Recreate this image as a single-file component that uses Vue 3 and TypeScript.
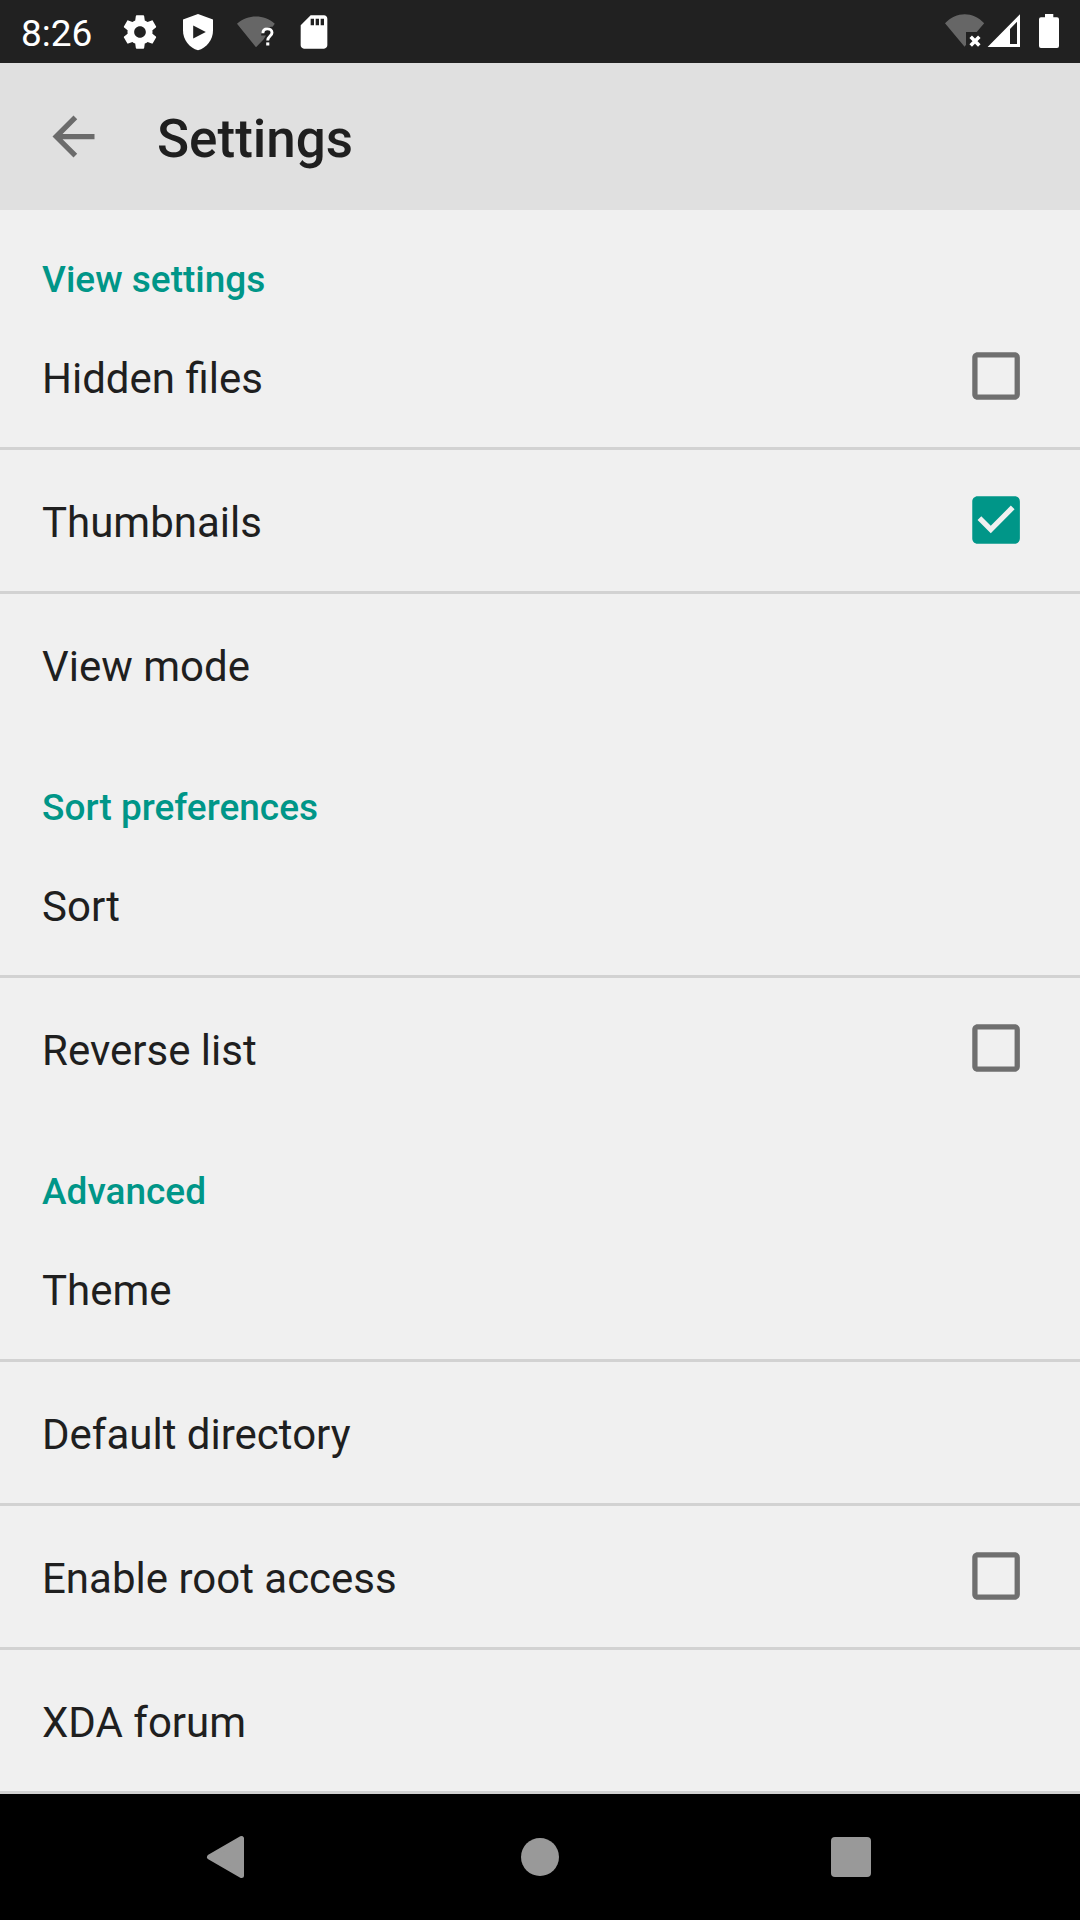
<script setup lang="ts">
interface Item {
  label: string
  checked?: boolean
}
interface Section {
  title: string
  items: Item[]
}

const sections: Section[] = [
  {
    title: 'View settings',
    items: [
      { label: 'Hidden files', checked: false },
      { label: 'Thumbnails', checked: true },
      { label: 'View mode' },
    ],
  },
  {
    title: 'Sort preferences',
    items: [{ label: 'Sort' }, { label: 'Reverse list', checked: false }],
  },
  {
    title: 'Advanced',
    items: [
      { label: 'Theme' },
      { label: 'Default directory' },
      { label: 'Enable root access', checked: false },
      { label: 'XDA forum' },
    ],
  },
]
</script>

<template>
  <div class="screen">
    <header class="status">
      <span class="clock">8:26</span>
      <div class="notifications">
        <svg width="40" height="40" viewBox="0 0 24 24" fill="#fff">
          <path d="M19.43 12.98c.04-.32.07-.64.07-.98s-.03-.66-.07-.98l2.11-1.65c.19-.15.24-.42.12-.64l-2-3.46c-.12-.22-.39-.3-.61-.22l-2.49 1c-.52-.4-1.08-.73-1.69-.98l-.38-2.65C14.46 2.18 14.25 2 14 2h-4c-.25 0-.46.18-.49.42l-.38 2.65c-.61.25-1.17.59-1.69.98l-2.49-1c-.23-.09-.49 0-.61.22l-2 3.46c-.13.22-.07.49.12.64l2.11 1.65c-.04.32-.07.65-.07.98s.03.66.07.98l-2.11 1.65c-.19.15-.24.42-.12.64l2 3.46c.12.22.39.3.61.22l2.49-1c.52.4 1.08.73 1.69.98l.38 2.65c.03.24.24.42.49.42h4c.25 0 .46-.18.49-.42l.38-2.65c.61-.25 1.17-.59 1.69-.98l2.49 1c.23.09.49 0 .61-.22l2-3.46c.12-.22.07-.49-.12-.64l-2.11-1.65zM12 15.5c-1.93 0-3.5-1.57-3.5-3.5s1.57-3.5 3.5-3.5 3.5 1.57 3.5 3.5-1.57 3.5-3.5 3.5z" />
        </svg>
        <svg width="40" height="40" viewBox="0 0 40 40">
          <path d="M20 2 5 7.6V18.500C5 28 11.500 36 20 38.300 28.500 36 35 28 35 18.500V7.600Z" fill="#fff" />
          <path d="M15.200 13.500V26.500L27.800 20Z" fill="#212121" />
        </svg>
        <svg width="40" height="40" viewBox="0 0 40 40">
          <path d="M1 11.700C12 2.200 28 2.200 38.800 11.700L36.600 14.800C31 14.400 25.500 17.300 25.100 23.500H30L27.500 27.500 20 35.300Z" fill="#666" />
          <path d="M26.900 21.300C26.900 18.300 28.800 16.900 31.400 16.900 34.200 16.900 36 18.500 36 20.700 36 24 31.700 24.200 31.700 28.500" fill="none" stroke="#fff" stroke-width="2.900" />
          <rect x="30.200" y="30.400" width="3.100" height="3.100" fill="#fff" />
        </svg>
        <svg width="40" height="40" viewBox="0 0 24 24" fill="#fff">
          <path d="M18 2h-8L4.020 8 4 20c0 1.100.9 2 2 2h12c1.100 0 2-.9 2-2V4c0-1.100-.9-2-2-2zm-6 6h-2V4h2v4zm3 0h-2V4h2v4zm3 0h-2V4h2v4z" />
        </svg>
      </div>
      <svg class="system" width="120" height="63" viewBox="940 0 120 63">
        <path d="M945 23.300C956.500 11.200 973 11.200 984.200 23.300L976.700 32H966V44.800L964.600 46.700Z" fill="#666" />
        <path d="M970.700 36.800 979.300 45.400M979.300 36.800 970.700 45.400" stroke="#fff" stroke-width="3.600" />
        <path fill-rule="evenodd" d="M1020 14.300V47H987.600ZM1017 21.700 1010 29V44H1017Z" fill="#fff" />
        <path d="M1045 14H1053.300V17.300H1057Q1059 17.300 1059 19.300V46Q1059 48 1057 48H1041Q1039 48 1039 46V19.300Q1039 17.300 1041 17.300H1045Z" fill="#fff" />
      </svg>
    </header>

    <div class="appbar">
      <svg width="63" height="63" viewBox="0 0 24 24" fill="#6b6b6b">
        <path d="M20 11H7.830l5.590-5.590L12 4l-8 8 8 8 1.410-1.410L7.830 13H20v-2z" />
      </svg>
      <h1>Settings</h1>
    </div>

    <main>
      <section v-for="section in sections" :key="section.title">
        <h2>{{ section.title }}</h2>
        <div v-for="item in section.items" :key="item.label" class="row">
          <span class="label">{{ item.label }}</span>
          <svg v-if="item.checked !== undefined" class="check" width="48" height="48" viewBox="2.900 2.950 18.150 18.150">
            <path v-if="item.checked" fill="#009688" d="M19 3H5c-1.110 0-2 .9-2 2v14c0 1.100.89 2 2 2h14c1.110 0 2-.9 2-2V5c0-1.100-.89-2-2-2zm-9 14l-5-5 1.410-1.410L10 14.170l7.590-7.590L19 8l-9 9z" />
            <path v-else fill="#6f6f6f" d="M19 5v14H5V5h14m0-2H5c-1.100 0-2 .9-2 2v14c0 1.100.9 2 2 2h14c1.100 0 2-.9 2-2V5c0-1.100-.9-2-2-2z" />
          </svg>
        </div>
      </section>
    </main>

    <nav>
      <svg width="42" height="48" viewBox="0 0 42 48">
        <path d="M4.500 24 36.500 5.500V42.500Z" fill="#999" stroke="#999" stroke-width="5" stroke-linejoin="round" />
      </svg>
      <span class="home"></span>
      <span class="recent"></span>
    </nav>
  </div>
</template>

<style>
body {
  margin: 0;
}
</style>

<style scoped>
.screen {
  width: 1080px;
  height: 1920px;
  display: flex;
  flex-direction: column;
  overflow: hidden;
  background: #f0f0f0;
  color: #1f1f1f;
  font-family: Roboto, sans-serif;
}
.status {
  height: 63px;
  flex: none;
  display: flex;
  align-items: center;
  background: #212121;
}
.clock {
  width: 99px;
  padding: 4px 0 0 21px;
  color: #fff;
  font-size: 37px;
  line-height: 44px;
}
.notifications {
  display: flex;
  gap: 18px;
}
.system {
  margin: 0 20px 0 auto;
}
.appbar {
  height: 147px;
  flex: none;
  display: flex;
  align-items: center;
  box-sizing: border-box;
  padding-left: 42px;
  background: #e0e0e0;
}
h1 {
  margin: 0 0 0 52px;
  padding-top: 5px;
  font-size: 53px;
  font-weight: 500;
  line-height: 62px;
}
main {
  flex: 1;
}
h2 {
  height: 96px;
  box-sizing: border-box;
  margin: 0;
  padding: 48px 42px 0;
  color: #009688;
  font-size: 37px;
  font-weight: 500;
  line-height: 44px;
}
.row {
  height: 144px;
  box-sizing: border-box;
  display: flex;
  align-items: center;
  justify-content: space-between;
  padding: 0 60px 0 42px;
  border-bottom: 3px solid #d2d2d2;
}
section:not(:last-child) .row:last-child {
  border-color: transparent;
}
.label {
  padding-top: 4px;
  font-size: 42px;
  line-height: 50px;
}
.check {
  margin-bottom: 1px;
}
nav {
  height: 126px;
  flex: none;
  display: flex;
  align-items: center;
  justify-content: space-between;
  box-sizing: border-box;
  padding: 0 209px 0 205px;
  background: #000;
}
.home {
  width: 38px;
  height: 38px;
  margin-left: 65px;
  margin-right: 63px;
  border-radius: 50%;
  background: #999;
}
.recent {
  width: 40px;
  height: 40px;
  border-radius: 4px;
  background: #999;
}
</style>
